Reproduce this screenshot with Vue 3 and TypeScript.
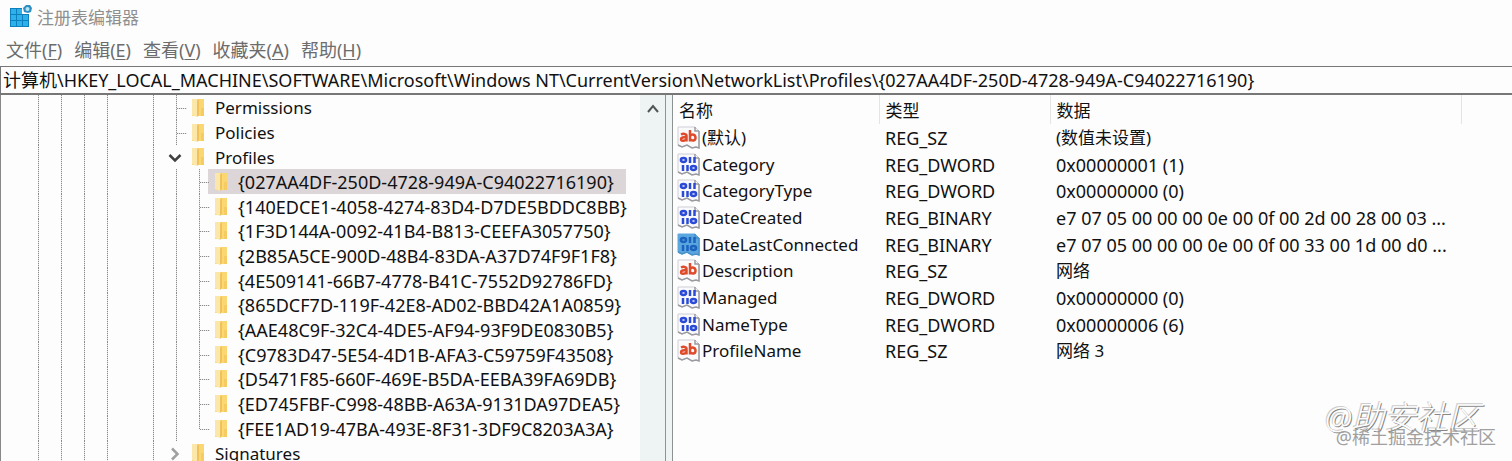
<script setup lang="ts">
import { ref } from 'vue'

type Guide = 'none' | 'line' | 'tee' | 'elbow' | 'open' | 'closed'
interface TreeNode { label: string; guides: Guide[]; profile?: boolean }
interface RegValue { name: string; type: string; data: string; kind: 'text' | 'binary'; active?: boolean }

const outer: Guide[] = ['line', 'line', 'line', 'line', 'none', 'line']
const top = (label: string, mark: Guide): TreeNode => ({ label, guides: [...outer, mark] })
const ids = [
  '{027AA4DF-250D-4728-949A-C94022716190}',
  '{140EDCE1-4058-4274-83D4-D7DE5BDDC8BB}',
  '{1F3D144A-0092-41B4-B813-CEEFA3057750}',
  '{2B85A5CE-900D-48B4-83DA-A37D74F9F1F8}',
  '{4E509141-66B7-4778-B41C-7552D92786FD}',
  '{865DCF7D-119F-42E8-AD02-BBD42A1A0859}',
  '{AAE48C9F-32C4-4DE5-AF94-93F9DE0830B5}',
  '{C9783D47-5E54-4D1B-AFA3-C59759F43508}',
  '{D5471F85-660F-469E-B5DA-EEBA39FA69DB}',
  '{ED745FBF-C998-48BB-A63A-9131DA97DEA5}',
  '{FEE1AD19-47BA-493E-8F31-3DF9C8203A3A}',
]
const nodes: TreeNode[] = [
  top('Permissions', 'tee'),
  top('Policies', 'tee'),
  top('Profiles', 'open'),
  ...ids.map((label, i): TreeNode => ({
    label,
    profile: true,
    guides: [...outer, 'line', i === ids.length - 1 ? 'elbow' : 'tee'],
  })),
  top('Signatures', 'closed'),
]

const values: RegValue[] = [
  { name: '(默认)', type: 'REG_SZ', data: '(数值未设置)', kind: 'text' },
  { name: 'Category', type: 'REG_DWORD', data: '0x00000001 (1)', kind: 'binary' },
  { name: 'CategoryType', type: 'REG_DWORD', data: '0x00000000 (0)', kind: 'binary' },
  { name: 'DateCreated', type: 'REG_BINARY', data: 'e7 07 05 00 00 00 0e 00 0f 00 2d 00 28 00 03 ...', kind: 'binary' },
  { name: 'DateLastConnected', type: 'REG_BINARY', data: 'e7 07 05 00 00 00 0e 00 0f 00 33 00 1d 00 d0 ...', kind: 'binary', active: true },
  { name: 'Description', type: 'REG_SZ', data: '网络', kind: 'text' },
  { name: 'Managed', type: 'REG_DWORD', data: '0x00000000 (0)', kind: 'binary' },
  { name: 'NameType', type: 'REG_DWORD', data: '0x00000006 (6)', kind: 'binary' },
  { name: 'ProfileName', type: 'REG_SZ', data: '网络 3', kind: 'text' },
]

const menus = [
  { label: '文件', key: 'F' },
  { label: '编辑', key: 'E' },
  { label: '查看', key: 'V' },
  { label: '收藏夹', key: 'A' },
  { label: '帮助', key: 'H' },
]

const selected = ref(ids[0])
const address = ref(
  '计算机\\HKEY_LOCAL_MACHINE\\SOFTWARE\\Microsoft\\Windows NT\\CurrentVersion\\NetworkList\\Profiles\\' + ids[0],
)
</script>

<template>
  <div class="window">
    <header class="title">
      <svg class="app-icon" viewBox="0 0 24 24" aria-hidden="true">
        <path d="M1 4h12v6h7v13H1z" fill="#0f7fbe" />
        <path d="M2 5h5v5H2zM8 5h5v5H8zM2 11h5v5H2zM8 11h5v5H8zM14 11h5v5h-5zM2 17h5v5H2zM8 17h5v5H8zM14 17h5v5h-5z" fill="#2db1ea" />
        <path d="M17 1h4l2 3-1 4-3 1-4-1-1-4z" fill="#2f8fc2" />
        <circle cx="18.500" cy="5" r="2" fill="#b5e6f8" />
      </svg>
      <span>注册表编辑器</span>
    </header>

    <nav class="menu">
      <button v-for="m in menus" :key="m.key" type="button">{{ m.label }}(<u>{{ m.key }}</u>)</button>
    </nav>

    <input v-model="address" class="address" type="text" aria-label="地址" spellcheck="false" />

    <main class="panes">
      <section class="tree-pane">
        <ul class="tree">
          <li v-for="n in nodes" :key="n.label" class="row">
            <span v-for="(g, i) in n.guides" :key="i" class="guide" :class="g">
              <svg v-if="g === 'open'" class="chevron" viewBox="0 0 14 14" aria-hidden="true">
                <path d="M1.500 4l5.500 5.500L12.500 4" fill="none" stroke="#404040" stroke-width="2.500" />
              </svg>
              <svg v-else-if="g === 'closed'" class="chevron" viewBox="0 0 14 14" aria-hidden="true">
                <path d="M4 1.500L9.500 7 4 12.500" fill="none" stroke="#a0a0a0" stroke-width="2.500" />
              </svg>
            </span>
            <button
              type="button"
              class="node"
              :class="{ selected: selected === n.label, profile: n.profile }"
              @click="selected = n.label"
            >
              <svg class="folder" viewBox="0 0 14 20" aria-hidden="true">
                <path d="M1 1h12v17H1z" fill="#fbd774" />
                <path d="M1 1h5v18l-5-2z" fill="#fce7ab" />
                <path d="M6 3l2-2v16l-2 2z" fill="#efc25c" />
                <path d="M10 10h3v8h-3z" fill="#f5cb62" />
              </svg>
              <span>{{ n.label }}</span>
            </button>
          </li>
        </ul>
        <div class="scrollbar">
          <button type="button" aria-label="向上滚动">
            <svg viewBox="0 0 14 14" aria-hidden="true">
              <path d="M2 10l5-6 5 6" fill="none" stroke="#505556" stroke-width="2" />
            </svg>
          </button>
        </div>
      </section>
      <div class="splitter"></div>
      <section class="value-pane">
        <table>
          <colgroup>
            <col class="c-name" /><col class="c-type" /><col class="c-data" /><col />
          </colgroup>
          <thead>
            <tr><th>名称</th><th>类型</th><th>数据</th><td></td></tr>
          </thead>
          <tbody>
            <tr v-for="v in values" :key="v.name">
              <td>
                <div class="name">
                  <svg class="value-icon" :class="{ active: v.active }" viewBox="0 0 24 24" aria-hidden="true">
                    <path class="page" d="M1 1h17l4 4v17l-3-1-4 1-5-3-5 2-4-2z" />
                    <path class="fold" d="M18 1v4h4M22 5v17l-3-1-4 1-5-3-5 2-4-2" />
                    <g v-if="v.kind === 'text'" fill="none" stroke="#de4a2a" stroke-width="2.500">
                      <path d="M4 8.500c2-1 5.500-1 5.500 1.500v5.500M9.500 11.500c-3-.5-5.500 0-5.500 1.700s3.500 2.300 5.500 0" />
                      <path d="M13 4v11.500M13 10c2-2.500 5.500-1.500 5.500 1.700s-3.500 3.500-5.500 1.500" />
                    </g>
                    <g v-else class="bits" fill="none" stroke-width="2.500">
                      <ellipse cx="6.500" cy="7" rx="2.600" ry="1.900" />
                      <path d="M13 4v6M17.500 4v6M6 12v6M10.500 12v6" />
                      <ellipse cx="16.500" cy="15" rx="2.600" ry="1.900" />
                    </g>
                  </svg>
                  <span>{{ v.name }}</span>
                </div>
              </td>
              <td class="code">{{ v.type }}</td>
              <td :class="{ code: v.kind === 'binary' }">{{ v.data }}</td>
              <td></td>
            </tr>
          </tbody>
        </table>
      </section>
    </main>

    <div class="watermark" aria-hidden="true">
      <span class="script">@助安社区</span>
      <span class="site">@稀土掘金技术社区</span>
    </div>
  </div>
</template>

<style>
body { margin: 0; background: #fdfdfd; }
</style>

<style scoped>
.window {
  position: relative;
  display: flex;
  flex-direction: column;
  height: 100vh;
  overflow: hidden;
  background: #fdfdfd;
  color: #111;
  font-family: "Noto Sans", "Noto Sans CJK SC", sans-serif;
  font-size: 17px;
}
button, input {
  padding: 0;
  border: 0;
  background: none;
  color: inherit;
  font: inherit;
}
.title {
  display: flex;
  align-items: center;
  gap: 4px;
  height: 32px;
  padding-left: 9px;
  color: #8f8f8f;
}
.app-icon { width: 24px; height: 24px; }
.menu {
  display: flex;
  gap: 12px;
  height: 34px;
  padding: 0 6px;
  box-sizing: border-box;
  color: #6c6c6c;
  font-size: 18px;
}
.menu button { white-space: nowrap; }
.menu u { text-underline-offset: 2px; }
.address {
  box-sizing: border-box;
  width: 100%;
  height: 29px;
  padding: 0 2px 3px;
  border: solid #777;
  border-width: 1px 0 2px 1px;
  outline: none;
  font-size: 18px;
}
.panes { display: flex; flex: 1; min-height: 0; }
.tree-pane {
  display: flex;
  flex: none;
  width: 665px;
  border-left: 1px solid #888;
  box-sizing: border-box;
}
.tree {
  flex: 1;
  min-width: 0;
  margin: 0;
  padding: 0 0 0 37px;
  list-style: none;
  overflow: hidden;
}
.row { display: flex; height: 25px; }
.row:nth-child(3n) { height: 24px; }
.guide { position: relative; flex: none; width: 23px; }
.line::before, .tee::before, .elbow::before {
  content: "";
  position: absolute;
  inset: 0 auto 0 0;
  width: 1px;
  background: repeating-linear-gradient(#8c8c8c 0 1px, #e4e4e4 1px 2px);
}
.elbow::before { bottom: 50%; }
.tee::after, .elbow::after {
  content: "";
  position: absolute;
  top: 50%;
  left: 1px;
  width: 10px;
  height: 1px;
  background: repeating-linear-gradient(90deg, #8c8c8c 0 1px, #e4e4e4 1px 2px);
}
.chevron { position: absolute; top: 6px; left: -8px; width: 14px; height: 14px; }
.node {
  display: flex;
  align-items: center;
  gap: 10px;
  margin-left: -14px;
  padding: 0 12px 0 6px;
  white-space: nowrap;
}
.node.profile { font-size: 18px; }
.node.selected { background: #dcd6d9; }
.folder { width: 14px; height: 20px; }
.scrollbar {
  flex: none;
  width: 25px;
  background: #edf4f3;
}
.scrollbar button { display: flex; justify-content: center; width: 100%; padding-top: 7px; }
.scrollbar svg { width: 14px; height: 14px; }
.splitter {
  flex: none;
  width: 6px;
  border: solid #8d9292;
  border-width: 0 1px;
  background: #edf4f3;
}
.value-pane { flex: 1; min-width: 0; overflow: hidden; }
table { width: 100%; border-collapse: collapse; table-layout: fixed; }
.c-name { width: 206px; }
.c-type { width: 171px; }
.c-data { width: 411px; }
th, td { padding: 0 0 0 6px; text-align: left; font-weight: 400; white-space: nowrap; line-height: 24px; }
td.code { font-size: 18px; }
thead tr { height: 29px; }
thead th { padding-top: 2px; border-right: 1px solid #e4e4e4; }
tbody tr { height: 27px; }
tbody tr:nth-child(3n) { height: 26px; }
tbody td:first-child { padding-left: 4px; }
.name { display: flex; align-items: center; gap: 1px; }
.value-icon { width: 24px; height: 24px; }
.page { fill: #fafafc; stroke: #cfcfd6; }
.fold { fill: none; stroke: #9a9aa0; stroke-width: 1.500; }
.bits { stroke: #2b4bd6; }
.active .page { fill: #5aa7e0; stroke: #5aa7e0; }
.active .fold { stroke: #4a90c8; }
.active .bits { stroke: #1c63bd; }
.watermark {
  position: absolute;
  right: 16px;
  bottom: 12px;
  display: grid;
  justify-items: end;
}
.script {
  margin-right: 16px;
  color: #fdfdfd;
  font-size: 32px;
  font-style: italic;
  font-weight: 300;
  line-height: 32px;
  text-shadow: 1px 1px 0 #888, -1px -1px 0 #ccc;
}
.site {
  margin-top: -8px;
  color: #a0a0a0;
  font-size: 18px;
  line-height: 24px;
}
</style>
